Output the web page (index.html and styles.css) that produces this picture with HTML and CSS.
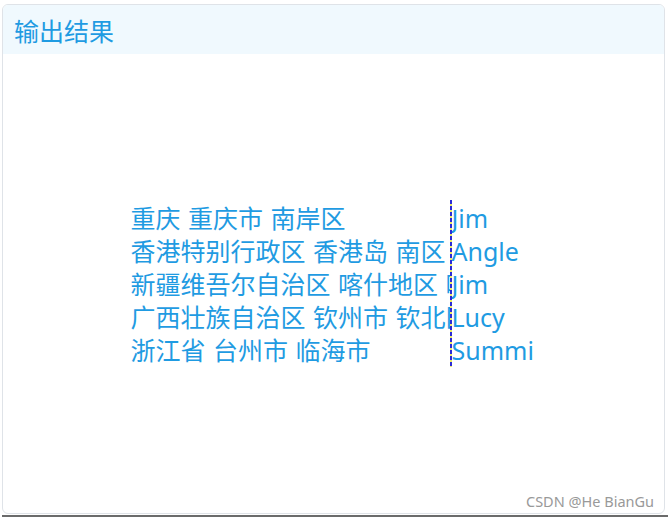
FILE: index.html
```html
<!DOCTYPE html>
<html lang="zh-CN">
<head>
<meta charset="utf-8">
<title>输出结果</title>
<link rel="stylesheet" href="styles.css">
</head>
<body>
<div class="card">
  <div class="head">输出结果</div>
  <div class="content">
    <div class="grid">
      <div class="col left">
        <div class="line">重庆 重庆市 南岸区</div>
        <div class="line">香港特别行政区 香港岛 南区</div>
        <div class="line">新疆维吾尔自治区 喀什地区 喀什市</div>
        <div class="line">广西壮族自治区 钦州市 钦北区</div>
        <div class="line">浙江省 台州市 临海市</div>
      </div>
      <div class="sep"></div>
      <div class="col right">
        <div class="line">Jim</div>
        <div class="line">Angle</div>
        <div class="line">Jim</div>
        <div class="line">Lucy</div>
        <div class="line">Summi</div>
      </div>
    </div>
    <div class="mark">CSDN @He BianGu</div>
  </div>
</div>
<div class="footer"></div>
</body>
</html>
```
FILE: styles.css
```css
html, body {
  margin: 0;
  padding: 0;
  background: #ffffff;
}
body {
  width: 668px;
  height: 518px;
  overflow: hidden;
  padding: 4px 0 0 2px;
  box-sizing: border-box;
  font-family: "Noto Sans", "Noto Sans CJK SC", sans-serif;
}
.card {
  width: 663px;
  height: 510px;
  box-sizing: border-box;
  border: 1px solid #dfe3e8;
  border-radius: 6px;
  display: flex;
  flex-direction: column;
  overflow: hidden;
  background: #fff;
}
.head {
  height: 49px;
  flex: none;
  background: #f0f9fe;
  color: #1f9be2;
  font-size: 25px;
  display: flex;
  align-items: center;
  padding-left: 11px;
  font-family: "Noto Sans CJK SC", sans-serif;
}
.content {
  flex: 1;
  position: relative;
  display: flex;
  align-items: center;
  justify-content: center;
}
.grid {
  display: grid;
  grid-template-columns: 319px 2px 83px;
  color: #1f9be2;
  font-size: 25px;
  line-height: 33px;
  margin-top: 1px;
  margin-left: -2px;
}
.col {
  display: flex;
  flex-direction: column;
}
.line {
  white-space: nowrap;
  overflow: hidden;
  height: 33px;
}
.left .line {
  word-spacing: 1px;
}
.sep {
  margin-top: -2px;
  background: repeating-linear-gradient(to bottom, #2b2bd6 0 4px, #ecec6a 4px 6px);
  width: 2px;
}
.mark {
  position: absolute;
  right: 10px;
  bottom: 2px;
  font-size: 14.5px;
  color: #999999;
  font-family: "Noto Sans", sans-serif;
}
.footer {
  height: 2px;
  margin-top: 1px;
  background: #6b6b6b;
}
```
